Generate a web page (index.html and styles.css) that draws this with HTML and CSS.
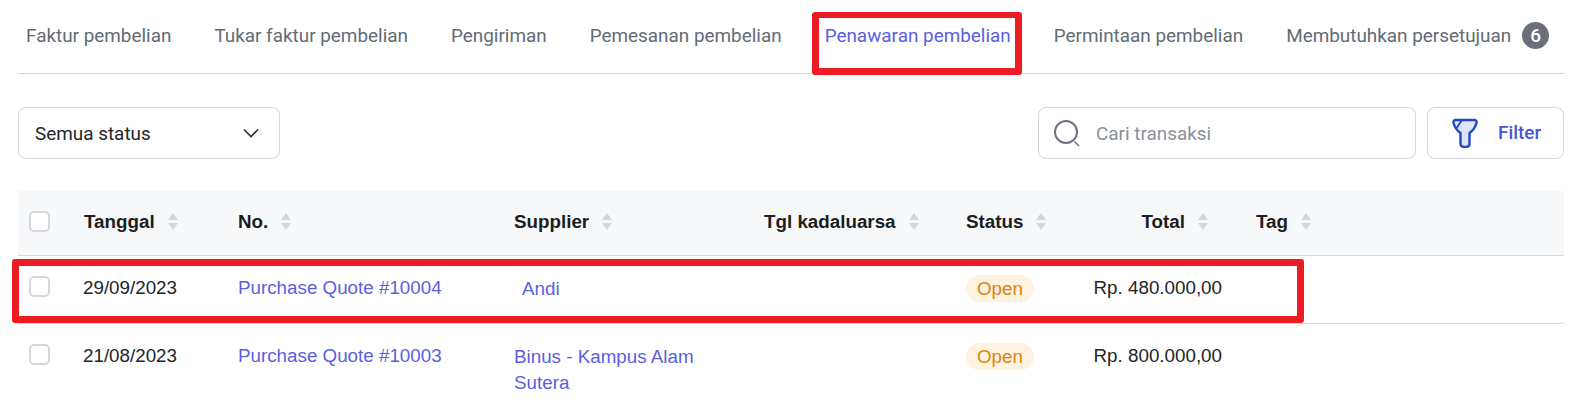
FILE: index.html
```html
<!DOCTYPE html>
<html lang="en">
<head>
  <meta charset="UTF-8">
  <title>Penawaran pembelian</title>
  <link rel="stylesheet" href="styles.css">
</head>
<body>
  <div class="page">
    <nav class="tabs">
      <a class="tab">Faktur pembelian</a>
      <a class="tab">Tukar faktur pembelian</a>
      <a class="tab">Pengiriman</a>
      <a class="tab">Pemesanan pembelian</a>
      <a class="tab active">Penawaran pembelian</a>
      <a class="tab">Permintaan pembelian</a>
      <a class="tab">Membutuhkan persetujuan <span class="count">6</span></a>
    </nav>

    <div class="toolbar">
      <div class="status-select">
        <span>Semua status</span>
        <svg width="18" height="10" viewBox="0 0 18 10" fill="none" stroke="#2b2f36" stroke-width="1.6"><path d="M2 1.5 9 8.5 16 1.5"/></svg>
      </div>
      <div class="toolbar-right">
        <div class="search">
          <svg width="30" height="30" viewBox="0 0 30 30" fill="none" stroke="#6b7280" stroke-width="2"><circle cx="14" cy="14" r="11"/><path d="M22.500 23.500 27 28" stroke-width="1.5"/></svg>
          <span>Cari transaksi</span>
        </div>
        <div class="filter-btn">
          <svg width="26" height="30" viewBox="0 0 26 30" fill="#dfe4fa" stroke="#1f49c7" stroke-width="2.4" stroke-linejoin="round"><path d="M4 2H22Q25 2 24.500 5 23 11 17.500 15V26Q17.500 29 13 29 8.500 29 8.500 26V15Q3 11 1.500 5 1 2 4 2Z"/><path d="M10 2 4 11" fill="none" stroke-width="1.800"/></svg>
          <span class="filter-label">Filter</span>
        </div>
      </div>
    </div>

    <table class="grid">
      <colgroup>
        <col class="c-check"><col class="c-date"><col class="c-no"><col class="c-supplier">
        <col class="c-expiry"><col class="c-status"><col class="c-total"><col class="c-tag">
      </colgroup>
      <thead>
        <tr>
          <th><span class="check"></span></th>
          <th class="date">Tanggal<span class="sort"></span></th>
          <th>No.<span class="sort"></span></th>
          <th>Supplier<span class="sort"></span></th>
          <th>Tgl kadaluarsa<span class="sort"></span></th>
          <th>Status<span class="sort"></span></th>
          <th class="right">Total<span class="sort"></span></th>
          <th class="tag">Tag<span class="sort"></span></th>
        </tr>
      </thead>
      <tbody>
        <tr>
          <td><span class="check"></span></td>
          <td>29/09/2023</td>
          <td><a class="link">Purchase Quote #10004</a></td>
          <td><a class="link supplier indent">Andi</a></td>
          <td></td>
          <td><span class="pill">Open</span></td>
          <td class="amount">Rp. 480.000,00</td>
          <td></td>
        </tr>
        <tr>
          <td><span class="check"></span></td>
          <td>21/08/2023</td>
          <td><a class="link">Purchase Quote #10003</a></td>
          <td><a class="link supplier">Binus - Kampus Alam Sutera</a></td>
          <td></td>
          <td><span class="pill">Open</span></td>
          <td class="amount">Rp. 800.000,00</td>
          <td></td>
        </tr>
      </tbody>
    </table>

    <div class="mark mark-tab"></div>
    <div class="mark mark-row"></div>
  </div>
</body>
</html>
```

FILE: styles.css
```css
html, body {
  margin: 0;
  height: 403px;
  overflow: hidden;
  background: #fff;
}
.page {
  position: relative;
  padding: 0 22px 0 18px;
  font-family: 'Liberation Sans', Arial, sans-serif;
  color: #212529;
}

/* tabs */
.tabs {
  display: flex;
  height: 74px;
  box-sizing: border-box;
  padding: 0 0 0 8px;
  gap: 43px;
  border-bottom: 1px solid #d1d5de;
  font-family: Roboto, sans-serif;
  font-size: 18.900px;
  color: #636b76;
}
.tab {
  display: flex;
  align-items: center;
  height: 70px;
  white-space: nowrap;
}
.active {
  color: #5a5fe0;
}
.count {
  display: inline-flex;
  align-items: center;
  justify-content: center;
  width: 27px;
  height: 27px;
  margin-left: 11px;
  border-radius: 50%;
  background: #6b6f7a;
  color: #fff;
  font-weight: 500;
}

/* toolbar */
.toolbar {
  display: flex;
  justify-content: space-between;
  margin-top: 33px;
}
.status-select, .search, .filter-btn {
  display: flex;
  align-items: center;
  box-sizing: border-box;
  height: 52px;
  border: 1px solid #d1d5de;
  border-radius: 8px;
  font-family: Roboto, sans-serif;
  font-size: 18.900px;
}
.status-select {
  width: 262px;
  padding: 0 19px 0 16px;
  justify-content: space-between;
  color: #22262b;
}
.toolbar-right {
  display: flex;
  gap: 11px;
}
.search {
  width: 378px;
  padding-left: 13px;
  gap: 14px;
  color: #8a919c;
}
.filter-btn {
  width: 137px;
  padding-left: 24px;
  gap: 20px;
  color: #4a55d6;
  font-weight: 500;
}
.filter-label {
  padding-bottom: 2px;
}

/* table */
.grid {
  width: 100%;
  margin-top: 32px;
  table-layout: fixed;
  border-collapse: collapse;
  font-size: 18.800px;
}
.c-check { width: 49px; }
.c-date { width: 155px; }
.c-no { width: 276px; }
.c-supplier { width: 250px; }
.c-expiry { width: 202px; }
.c-status { width: 128px; }
.c-total { width: 160px; }
.grid th {
  height: 64px;
  padding: 0 0 2px 16px;
  box-sizing: border-box;
  background: #f7f8fa;
  border-bottom: 1px solid #d8dbe2;
  text-align: left;
  font-weight: 700;
  color: #1b1d21;
  white-space: nowrap;
}
.grid th.date {
  padding-left: 17px;
}
.grid th.right {
  text-align: right;
  padding-right: 29px;
}
.grid th.tag {
  padding-left: 18px;
}
.grid td {
  height: 68px;
  padding: 20px 0 0 16px;
  box-sizing: border-box;
  vertical-align: top;
  border-bottom: 1px solid #d8dbe2;
  line-height: 24px;
}
.grid tbody tr:last-child td {
  padding-bottom: 8px;
}
.grid td.amount {
  padding: 20px 16px 0 0;
  text-align: right;
  white-space: nowrap;
}
.link {
  color: #5a5fe0;
}
.supplier {
  display: block;
  max-width: 200px;
  line-height: 26px;
}
.indent {
  margin-left: 8px;
}
.check {
  display: block;
  box-sizing: border-box;
  width: 21px;
  height: 21px;
  margin-left: -5px;
  border: 2px solid #d3d7df;
  border-radius: 5px;
  background: #fff;
}
.sort {
  display: inline-block;
  position: relative;
  width: 11px;
  height: 17px;
  margin-left: 13px;
  vertical-align: -2px;
}
.sort::before, .sort::after {
  content: "";
  position: absolute;
  left: 0;
  border-left: 5.500px solid transparent;
  border-right: 5.500px solid transparent;
}
.sort::before {
  top: 0;
  border-bottom: 7px solid #d3d7df;
}
.sort::after {
  bottom: 0;
  border-top: 7px solid #d3d7df;
}
.pill {
  display: block;
  width: 68px;
  height: 27px;
  margin-top: -1px;
  border-radius: 14px;
  background: #fdf3e0;
  color: #e0820f;
  text-align: center;
  line-height: 27px;
}

/* red annotation boxes drawn over the screenshot */
.mark {
  position: absolute;
  box-sizing: border-box;
  border: 7px solid #ed1c24;
  border-radius: 3px;
}
.mark-tab {
  left: 812px;
  top: 12px;
  width: 210px;
  height: 63px;
  border-top-width: 6px;
}
.mark-row {
  left: 12px;
  top: 259px;
  width: 1292px;
  height: 64px;
}
```
